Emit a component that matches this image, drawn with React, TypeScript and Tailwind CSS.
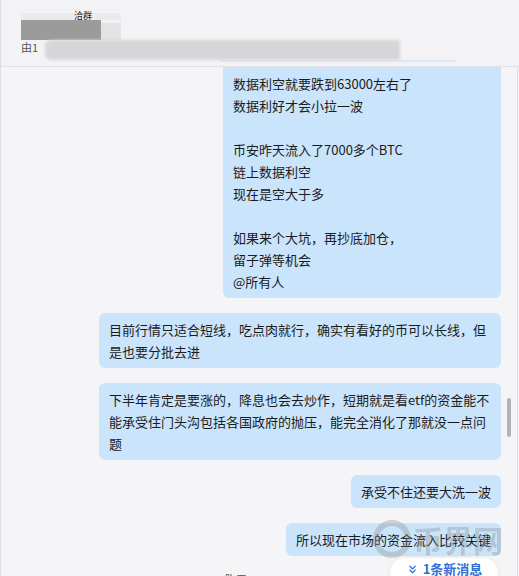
import { ChevronsDown } from "lucide-react";

const font = { fontFamily: "'Noto Sans CJK SC', 'Noto Sans', sans-serif" };

const messages = [
  {
    text: "数据利空就要跌到63000左右了\n数据利好才会小拉一波\n\n币安昨天流入了7000多个BTC\n链上数据利空\n现在是空大于多\n\n如果来个大坑，再抄底加仓，\n留子弹等机会\n@所有人",
    first: true,
  },
  { text: "目前行情只适合短线，吃点肉就行，确实有看好的币可以长线，但是也要分批去进" },
  { text: "下半年肯定是要涨的，降息也会去炒作，短期就是看etf的资金能不能承受住门头沟包括各国政府的抛压，能完全消化了那就没一点问题" },
  { text: "承受不住还要大洗一波" },
  { text: "所以现在市场的资金流入比较关键" },
];

function Header() {
  return (
    <div className="flex h-[67px] shrink-0 flex-col border-b border-[#e3e3e6] bg-[#f3f3f5] pl-[20px] pt-[13px]">
      {/* blurred group title */}
      <div className="flex">
        <div className="flex w-[100px] flex-col">
          <div className="flex h-[7px] items-end bg-[#ebebed] pl-[53px]">
            <span className="text-[9px] leading-none text-[#222]">洽群</span>
          </div>
          <div className="flex h-[20px]">
            <div className="w-[80px] bg-[#9b9b9b]" />
            <div className="mt-[3px] w-[20px] bg-[#e3e3e5]" />
          </div>
        </div>
      </div>
      {/* blurred subtitle */}
      <div className="flex items-start">
        <span className="pt-[2px] text-[11px] leading-none text-[#555]">由1</span>
        <div className="ml-[7px] flex flex-col">
          <div className="h-[20px] w-[355px] rounded-l-[6px] bg-[#d6d6d8] blur-[1.5px]" />
          <div className="ml-[175px] h-[2px] w-[235px] bg-[#dce9f5]" />
        </div>
      </div>
    </div>
  );
}

function Bubble({ text, first }: { text: string; first?: boolean }) {
  return (
    <div
      className={
        first
          ? "w-[278px] whitespace-pre-line rounded-b-[6px] bg-[#cae4fb] px-[10px] py-[5.5px] text-[13px] leading-[22px] text-[#1b1b1b]"
          : "max-w-[402px] whitespace-pre-line rounded-[6px] bg-[#cae4fb] px-[10px] py-[5.5px] text-[13px] leading-[22px] text-[#1b1b1b]"
      }
    >
      {text}
    </div>
  );
}

export default function App() {
  return (
    <div
      className="relative flex h-[576px] w-[519px] flex-col overflow-hidden border-l border-[#e0e0e2] bg-[#f5f5f7]"
      style={font}
    >
      <Header />

      <div className="flex min-h-0 flex-1">
        {/* message list */}
        <div className="relative flex w-[517px] flex-col items-end gap-[15px] border-r border-[#dedee0] pr-[16px]">
          {messages.map((m, i) => (
            <Bubble key={i} text={m.text} first={m.first} />
          ))}
          <div className="w-full text-center text-[11px] text-[#555]">昨天 21:36</div>

          {/* scrollbar thumb */}
          <div className="absolute right-[6px] top-[331px] h-[39px] w-[4px] rounded-full bg-[#b3b3b5]" />
        </div>
      </div>

      {/* watermark */}
      <div className="pointer-events-none absolute left-[372px] top-[520px] flex items-center gap-[2px] opacity-35">
        <div className="h-[38px] w-[38px] rounded-full border-[6px] border-[#8d8d8d]" />
        <span className="text-[30px] font-bold leading-none text-[#8d8d8d]">币界网</span>
      </div>

      {/* new message pill */}
      <div className="absolute bottom-[-12px] right-[21px] flex h-[30px] w-[108px] items-start justify-center gap-[4px] rounded-full bg-white pt-[2px] shadow-[0_0_4px_rgba(0,0,0,0.08)]">
        <ChevronsDown size={13} strokeWidth={2.2} className="mt-[3px] text-[#2f6fd6]" />
        <span className="text-[13px] font-bold leading-[18px] text-[#2f6fd6]">1条新消息</span>
      </div>
    </div>
  );
}
